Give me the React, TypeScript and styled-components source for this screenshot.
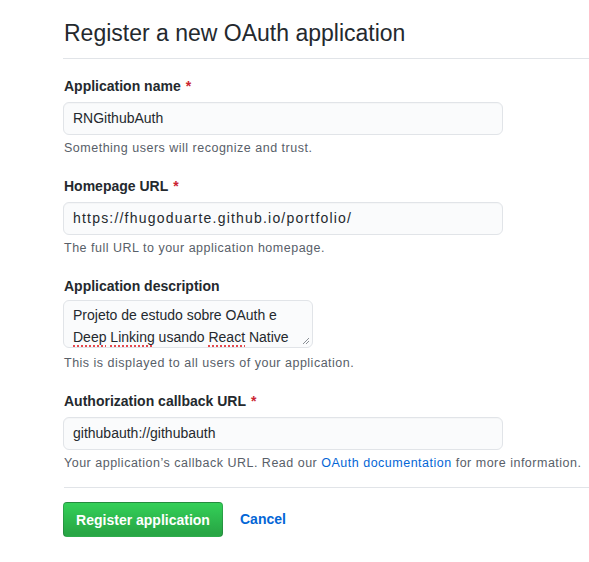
import React from "react";
import styled, { createGlobalStyle } from "styled-components";

const GlobalStyle = createGlobalStyle`
  html, body {
    margin: 0;
    padding: 0;
    background: #ffffff;
  }
  body {
    font-family: "Liberation Sans", Arial, sans-serif;
    color: #24292e;
    font-size: 14px;
    line-height: 1.5;
  }
  * { box-sizing: border-box; }
`;

const Page = styled.div`
  padding: 15px 0 0 63px;
  width: 589px;
`;

const Subhead = styled.div`
  padding-bottom: 7px;
  border-bottom: 1px solid #e1e4e8;
  margin-bottom: 15px;
`;

const Heading = styled.h2`
  margin: 0;
  font-size: 23px;
  font-weight: 400;
  line-height: 36px;
  padding-left: 1px;
`;

const Form = styled.form`
  display: flex;
  flex-direction: column;
`;

const Group = styled.dl`
  margin: 0 0 17px 0;
  display: flex;
  flex-direction: column;
`;

const Label = styled.dt`
  margin: 2px 0 5px 1px;
  font-size: 14px;
  font-weight: 700;
  line-height: 21px;
`;

const Required = styled.span`
  color: #cb2431;
  margin-left: 5px;
`;

const Field = styled.dd`
  margin: 0;
  display: flex;
  flex-direction: column;
`;

const Input = styled.div<{ $tracking?: number }>`
  width: 440px;
  height: 33px;
  padding: 0 9px;
  display: flex;
  align-items: center;
  font-size: 14px;
  letter-spacing: ${(p) => (p.$tracking ? `${p.$tracking}px` : "normal")};
  color: #24292e;
  background: #fafbfc;
  border: 1px solid #e1e4e8;
  border-radius: 6px;
  box-shadow: inset 0 1px 0 rgba(225, 228, 232, 0.2);
  white-space: nowrap;
`;

const TextArea = styled.div`
  position: relative;
  width: 250px;
  height: 48px;
  margin: -2px 0 2px 0;
  padding: 3px 9px 0 9px;
  font-size: 14px;
  line-height: 22px;
  color: #24292e;
  background: #fafbfc;
  border: 1px solid #e1e4e8;
  border-radius: 6px;
  overflow: hidden;
  white-space: nowrap;
`;

const Misspelled = styled.span`
  text-decoration: underline dotted #e5484d;
  text-decoration-thickness: 2px;
  text-underline-offset: 3px;
`;

const Grip = styled.svg`
  position: absolute;
  right: 2px;
  bottom: 2px;
`;

const Note = styled.p`
  margin: 4px 0 0 1px;
  font-size: 12.5px;
  letter-spacing: 0.5px;
  line-height: 18px;
  color: #586069;
  white-space: nowrap;
`;

const Link = styled.a`
  color: #0366d6;
  text-decoration: none;
`;

const Divider = styled.hr`
  margin: -2px 0 14px 1px;
  border: 0;
  border-top: 1px solid #e1e4e8;
  height: 0;
`;

const Actions = styled.div`
  display: flex;
  align-items: center;
  gap: 17px;
`;

const PrimaryButton = styled.button`
  width: 160px;
  height: 35px;
  padding: 0 8px;
  font-family: inherit;
  font-size: 14px;
  font-weight: 700;
  white-space: nowrap;
  color: #ffffff;
  background: linear-gradient(-180deg, #34d058 0%, #28a745 90%);
  border: 1px solid rgba(27, 31, 35, 0.2);
  border-radius: 4px;
  cursor: pointer;
`;

const CancelLink = styled.a`
  font-size: 14px;
  font-weight: 700;
  color: #0366d6;
  text-decoration: none;
`;

export default function App() {
  return (
    <>
      <GlobalStyle />
      <Page>
        <Subhead>
          <Heading>Register a new OAuth application</Heading>
        </Subhead>
        <Form>
          <Group>
            <Label>
              Application name<Required>*</Required>
            </Label>
            <Field>
              <Input>RNGithubAuth</Input>
              <Note>Something users will recognize and trust.</Note>
            </Field>
          </Group>
          <Group>
            <Label>
              Homepage URL<Required>*</Required>
            </Label>
            <Field>
              <Input $tracking={1.2}>https://fhugoduarte.github.io/portfolio/</Input>
              <Note>The full URL to your application homepage.</Note>
            </Field>
          </Group>
          <Group>
            <Label>Application description</Label>
            <Field>
              <TextArea>
                Projeto de estudo sobre OAuth e
                <br />
                <Misspelled>Deep</Misspelled> <Misspelled>Linking</Misspelled> usando{" "}
                <Misspelled>React</Misspelled> Native
                <Grip width="8" height="8" viewBox="0 0 8 8">
                  <path d="M7 1 L1 7 M7 4 L4 7" stroke="#8a8f95" strokeWidth="1" fill="none" />
                </Grip>
              </TextArea>
              <Note>This is displayed to all users of your application.</Note>
            </Field>
          </Group>
          <Group>
            <Label>
              Authorization callback URL<Required>*</Required>
            </Label>
            <Field>
              <Input>githubauth://githubauth</Input>
              <Note>
                Your application’s callback URL. Read our{" "}
                <Link href="#">OAuth documentation</Link> for more information.
              </Note>
            </Field>
          </Group>
          <Divider />
          <Actions>
            <PrimaryButton type="button">Register application</PrimaryButton>
            <CancelLink href="#">Cancel</CancelLink>
          </Actions>
        </Form>
      </Page>
    </>
  );
}
